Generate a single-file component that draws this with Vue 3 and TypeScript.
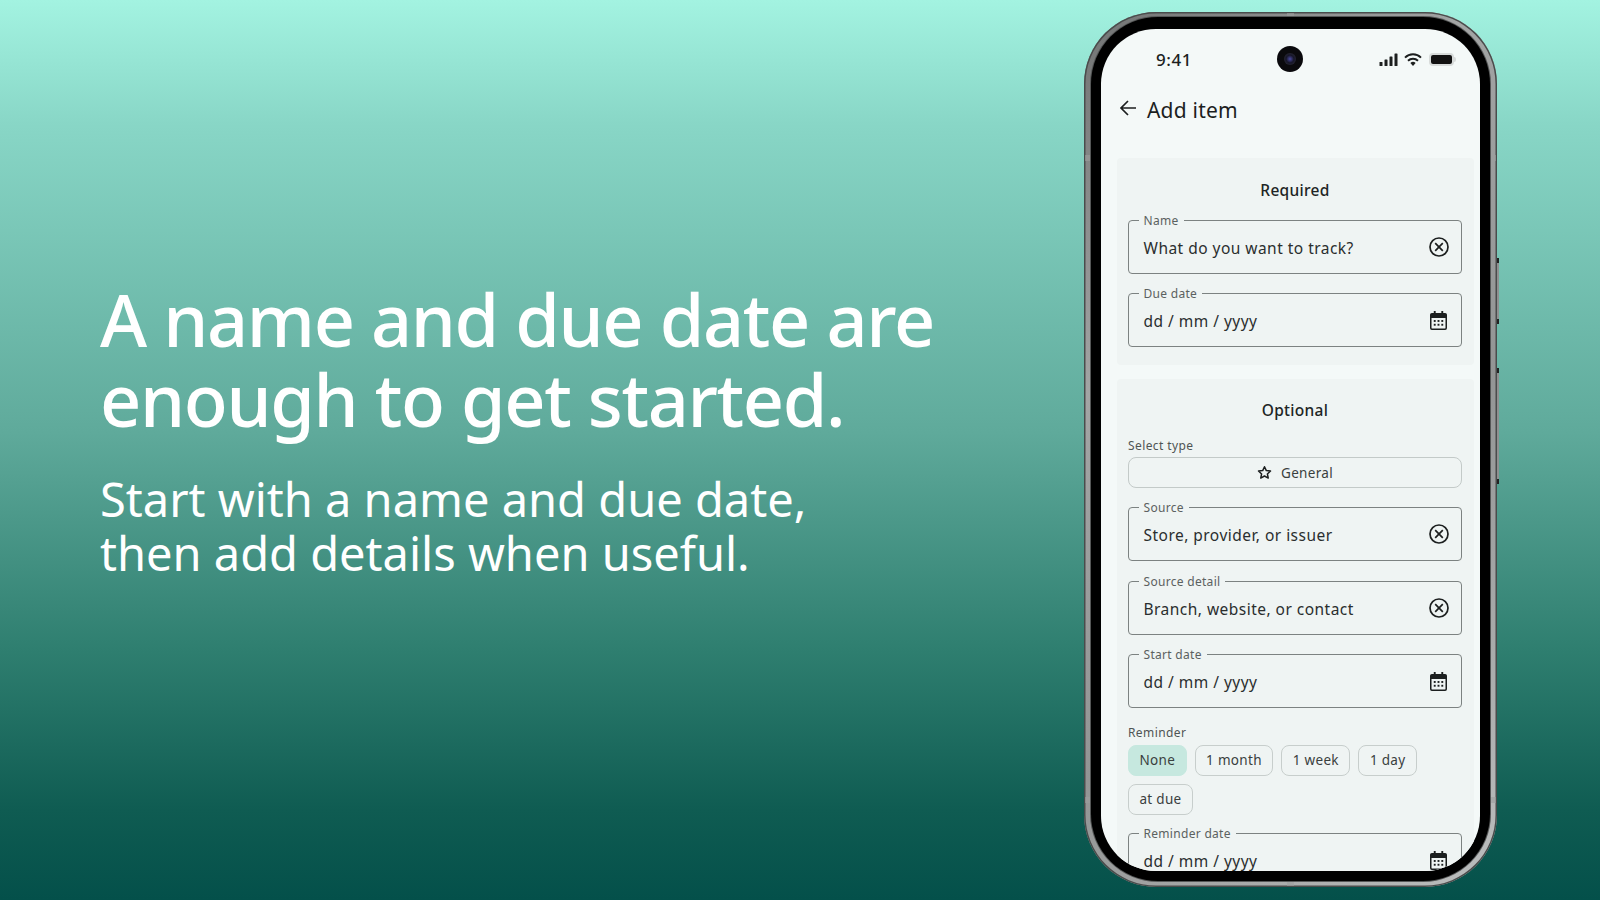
<script setup lang="ts">
type FieldKind = 'clear' | 'date'
interface Field { label: string; value: string; kind: FieldKind }

const required: Field[] = [
  { label: 'Name', value: 'What do you want to track?', kind: 'clear' },
  { label: 'Due date', value: 'dd / mm / yyyy', kind: 'date' },
]
const optional: Field[] = [
  { label: 'Source', value: 'Store, provider, or issuer', kind: 'clear' },
  { label: 'Source detail', value: 'Branch, website, or contact', kind: 'clear' },
  { label: 'Start date', value: 'dd / mm / yyyy', kind: 'date' },
]
const reminders = ['None', '1 month', '1 week', '1 day', 'at due']
const last: Field = { label: 'Reminder date', value: 'dd / mm / yyyy', kind: 'date' }
</script>

<template>
  <main class="stage">
    <section class="copy">
      <h1>A name and due date are<br />enough to get started.</h1>
      <p>Start with a name and due date,<br />then add details when useful.</p>
    </section>

    <div class="phone">
      <i class="btn btn-a"></i>
      <i class="btn btn-b"></i>
      <i class="ant ant-top"></i>
      <i class="ant ant-bottom"></i>
      <i class="ant ant-side ant-l1"></i>
      <i class="ant ant-side ant-r1"></i>
      <i class="ant ant-side ant-l2"></i>
      <i class="ant ant-side ant-r2"></i>
      <div class="bezel">
        <div class="screen">
          <div class="status">
            <span class="time">9:41</span>
            <span class="camera"><i></i></span>
            <span class="status-icons">
              <svg width="20" height="13" viewBox="0 0 20 13"><rect x="0.5" y="9" width="3" height="4" rx="0.6"/><rect x="5.5" y="6.5" width="3" height="6.5" rx="0.6"/><rect x="10.5" y="3.5" width="3" height="9.5" rx="0.6"/><rect x="15.5" y="0.5" width="3" height="12.5" rx="0.6"/></svg>
              <svg width="18" height="13" viewBox="0 0 18 13" fill="none" stroke="#1c1f1f" stroke-width="2"><path d="M1 4.6a11.5 11.5 0 0 1 16 0"/><path d="M4 7.7a7.2 7.2 0 0 1 10 0"/><path d="M9 13l-2.6-3a3.6 3.6 0 0 1 5.2 0z" fill="#1c1f1f" stroke="none"/></svg>
              <span class="battery"><i></i></span>
            </span>
          </div>

          <header class="appbar">
            <svg width="20" height="20" viewBox="0 0 20 20" fill="none" stroke="#1c1f1f" stroke-width="1.7"><path d="M18 10H3M10 3l-7 7 7 7"/></svg>
            <span>Add item</span>
          </header>

          <section class="panel panel-req">
            <h2>Required</h2>
            <div class="stack">
              <div v-for="f in required" :key="f.label" class="field">
                <label>{{ f.label }}</label>
                <span class="value">{{ f.value }}</span>
                <svg v-if="f.kind === 'clear'" class="ico" width="20" height="20" viewBox="0 0 20 20" fill="none" stroke="#1c1f1f" stroke-width="1.7"><circle cx="10" cy="10" r="9"/><path d="M6.2 6.2l7.6 7.6M13.8 6.2l-7.6 7.6"/></svg>
                <svg v-else class="ico cal" width="17" height="19" viewBox="0 0 18 20"><path fill="#1c1f1f" d="M4 0h2v2h6V0h2v2h2a2 2 0 0 1 2 2v14a2 2 0 0 1-2 2H2a2 2 0 0 1-2-2V4a2 2 0 0 1 2-2h2zM1.6 7.4V18c0 .2.2.4.4.4h14c.2 0 .4-.2.4-.4V7.4z"/><g fill="#1c1f1f"><rect x="4" y="9.5" width="2" height="2"/><rect x="8" y="9.5" width="2" height="2"/><rect x="12" y="9.5" width="2" height="2"/><rect x="4" y="13.5" width="2" height="2"/><rect x="8" y="13.5" width="2" height="2"/><rect x="12" y="13.5" width="2" height="2"/></g></svg>
              </div>
            </div>
          </section>

          <section class="panel panel-opt">
            <h2>Optional</h2>
            <div class="caption type-cap">Select type</div>
            <div class="type-btn">
              <svg width="15" height="15" viewBox="0 0 24 24" fill="none" stroke="#1c1f1f" stroke-width="2.4" stroke-linejoin="round"><path d="M12 2.8l2.9 6.1 6.7.8-5 4.6 1.4 6.6L12 17.6l-6 3.3 1.4-6.6-5-4.6 6.7-.8z"/></svg>
              <span>General</span>
            </div>
            <div class="stack opt-stack">
              <div v-for="f in optional" :key="f.label" class="field">
                <label>{{ f.label }}</label>
                <span class="value">{{ f.value }}</span>
                <svg v-if="f.kind === 'clear'" class="ico" width="20" height="20" viewBox="0 0 20 20" fill="none" stroke="#1c1f1f" stroke-width="1.7"><circle cx="10" cy="10" r="9"/><path d="M6.2 6.2l7.6 7.6M13.8 6.2l-7.6 7.6"/></svg>
                <svg v-else class="ico cal" width="17" height="19" viewBox="0 0 18 20"><path fill="#1c1f1f" d="M4 0h2v2h6V0h2v2h2a2 2 0 0 1 2 2v14a2 2 0 0 1-2 2H2a2 2 0 0 1-2-2V4a2 2 0 0 1 2-2h2zM1.6 7.4V18c0 .2.2.4.4.4h14c.2 0 .4-.2.4-.4V7.4z"/><g fill="#1c1f1f"><rect x="4" y="9.5" width="2" height="2"/><rect x="8" y="9.5" width="2" height="2"/><rect x="12" y="9.5" width="2" height="2"/><rect x="4" y="13.5" width="2" height="2"/><rect x="8" y="13.5" width="2" height="2"/><rect x="12" y="13.5" width="2" height="2"/></g></svg>
              </div>
            </div>
            <div class="caption rem-cap">Reminder</div>
            <div class="chips">
              <span v-for="(r, i) in reminders" :key="r" class="chip" :class="{ on: i === 0 }">{{ r }}</span>
            </div>
            <div class="field last">
              <label>{{ last.label }}</label>
              <span class="value">{{ last.value }}</span>
              <svg class="ico cal" width="17" height="19" viewBox="0 0 18 20"><path fill="#1c1f1f" d="M4 0h2v2h6V0h2v2h2a2 2 0 0 1 2 2v14a2 2 0 0 1-2 2H2a2 2 0 0 1-2-2V4a2 2 0 0 1 2-2h2zM1.6 7.4V18c0 .2.2.4.4.4h14c.2 0 .4-.2.4-.4V7.4z"/><g fill="#1c1f1f"><rect x="4" y="9.5" width="2" height="2"/><rect x="8" y="9.5" width="2" height="2"/><rect x="12" y="9.5" width="2" height="2"/><rect x="4" y="13.5" width="2" height="2"/><rect x="8" y="13.5" width="2" height="2"/><rect x="12" y="13.5" width="2" height="2"/></g></svg>
            </div>
          </section>
        </div>
      </div>
    </div>
  </main>
</template>

<style>
html, body { margin: 0; padding: 0; }
</style>

<style scoped>
.stage {
  width: 1600px;
  height: 900px;
  overflow: hidden;
  display: flex;
  justify-content: space-between;
  box-sizing: border-box;
  padding: 12px 103px 13px 100px;
  background: linear-gradient(180deg, #a3f3e1 0%, #88d6c6 14%, #5faa9b 48%, #2f7f70 72%, #0f5c52 90%, #04504a 100%);
  font-family: "Noto Sans", "Open Sans", sans-serif;
}
.copy { align-self: flex-start; margin-top: 267px; color: #fff; }
.copy h1 {
  margin: 0;
  font-size: 72px;
  line-height: 80px;
  font-weight: 500;
  letter-spacing: -1.35px;
  white-space: nowrap;
}
.copy p {
  margin: 33px 0 0;
  font-size: 47px;
  line-height: 54px;
  font-weight: 400;
  white-space: nowrap;
}
.phone {
  position: relative;
  width: 413px;
  height: 875px;
  box-sizing: border-box;
  padding: 5px 7px 6px;
  border-radius: 72px;
  background: linear-gradient(135deg, #707272, #a3a5a5 30%, #939595 60%, #bcbebe);
  box-shadow: inset 0 0 0 1.5px #4a4c4c;
}
.btn {
  position: absolute;
  right: -2px;
  width: 2px;
  background: #8e9090;
  border-top: 5px solid #222;
  border-bottom: 5px solid #222;
}
.btn-a { top: 246px; height: 56px; }
.btn-b { top: 356px; height: 106px; }
.ant { position: absolute; background: #9c9e9e; opacity: 0.6; }
.ant-top { top: 1px; left: 203px; width: 7px; height: 3px; }
.ant-bottom { bottom: 1px; left: 203px; width: 7px; height: 4px; }
.ant-side { width: 5px; height: 6px; }
.ant-l1 { left: 1px; top: 143px; }
.ant-r1 { right: 1px; top: 143px; }
.ant-l2 { left: 1px; top: 785px; }
.ant-r2 { right: 1px; top: 785px; }
.bezel {
  position: relative;
  height: 100%;
  box-sizing: border-box;
  padding: 12px 10px 10px;
  border-radius: 67px;
  background: #000;
  box-shadow: 0 0 0 1px #555757;
}
.screen {
  height: 100%;
  overflow: hidden;
  border-radius: 55px;
  background: #f4f9f8;
  color: #1c1f1f;
}
.status {
  height: 60px;
  display: flex;
  align-items: center;
  justify-content: space-between;
  position: relative;
  padding: 0 26px 0 55px;
}
.time { font-size: 17px; font-weight: 500; letter-spacing: 0.6px; }
.camera {
  position: absolute;
  left: 50%;
  top: 17px;
  margin-left: -14px;
  width: 26px;
  height: 26px;
  border-radius: 50%;
  background: #0a0a0d;
  display: flex;
  align-items: center;
  justify-content: center;
}
.camera i {
  width: 12px;
  height: 12px;
  border-radius: 50%;
  background: radial-gradient(circle, #4a4aa0 0, #17172a 45%, #33333a 100%);
}
.status-icons { display: flex; align-items: center; gap: 5px; }
.status-icons svg:first-child rect { fill: #1c1f1f; }
.battery {
  position: relative;
  width: 25px;
  height: 13px;
  box-sizing: border-box;
  border: 2px solid #d7dbda;
  border-radius: 4px;
  display: block;
  margin-left: 2px;
}
.battery::after {
  content: "";
  position: absolute;
  right: -4px;
  top: 2px;
  width: 2px;
  height: 5px;
  background: #d7dbda;
  border-radius: 0 2px 2px 0;
}
.battery i { display: block; height: 100%; border-radius: 2px; background: #111; }
.appbar {
  height: 40px;
  margin-top: 1px;
  display: flex;
  align-items: center;
  gap: 9px;
  padding-left: 17px;
  font-size: 21px;
  letter-spacing: 0.2px;
}
.appbar svg { position: relative; top: -2px; }
.panel { margin: 0 6px 0 16px; background: #eff4f3; padding: 0 12px 0 11px; }
.panel-req { margin-top: 28px; height: 207px; box-sizing: border-box; padding-top: 22px; border-radius: 4px; }
.panel-opt { margin-top: 14px; height: 520px; box-sizing: border-box; padding-top: 21px; border-radius: 4px; }
h2 {
  margin: 0;
  font-size: 15.5px;
  line-height: 20px;
  font-weight: 500;
  text-align: center;
  letter-spacing: 0.3px;
  color: #202424;
}
.stack { display: flex; flex-direction: column; gap: 19.5px; }
.panel-req .stack { margin-top: 20px; gap: 19px; }
.field {
  position: relative;
  height: 54px;
  box-sizing: border-box;
  border: 1px solid #7c8281;
  border-radius: 4px;
  display: flex;
  align-items: center;
  justify-content: space-between;
  padding: 2px 12px 0 14.5px;
}
.field label {
  position: absolute;
  top: -8px;
  left: 9.5px;
  padding: 0 5px;
  background: #eff4f3;
  font-size: 12px;
  line-height: 15px;
  letter-spacing: 0.3px;
  color: #5b6160;
}
.value { font-size: 15.5px; letter-spacing: 0.47px; color: #2a2e2e; }
.ico { flex: none; position: relative; top: -1px; }
.cal { margin-right: 2px; }
.caption { font-size: 12px; line-height: 15px; letter-spacing: 0.4px; color: #4f5554; }
.type-cap { margin-top: 18px; }
.type-btn {
  margin-top: 4px;
  height: 31px;
  box-sizing: border-box;
  border: 1px solid #c3cac8;
  border-radius: 8px;
  display: flex;
  align-items: center;
  justify-content: center;
  gap: 9px;
  font-size: 13.5px;
  letter-spacing: 0.3px;
  color: #3a3f3e;
}
.opt-stack { margin-top: 19px; }
.rem-cap { margin-top: 16.5px; }
.chips { margin-top: 5px; display: flex; flex-wrap: wrap; gap: 8px; }
.chip {
  height: 31px;
  box-sizing: border-box;
  border: 1px solid #c7cecc;
  border-radius: 8px;
  padding: 0 10.5px;
  display: flex;
  align-items: center;
  font-size: 13.5px;
  letter-spacing: 0.3px;
  color: #3a3f3e;
}
.chip.on { background: #c6e8df; border-color: #c6e8df; }
.last { margin-top: 18.5px; }
</style>
